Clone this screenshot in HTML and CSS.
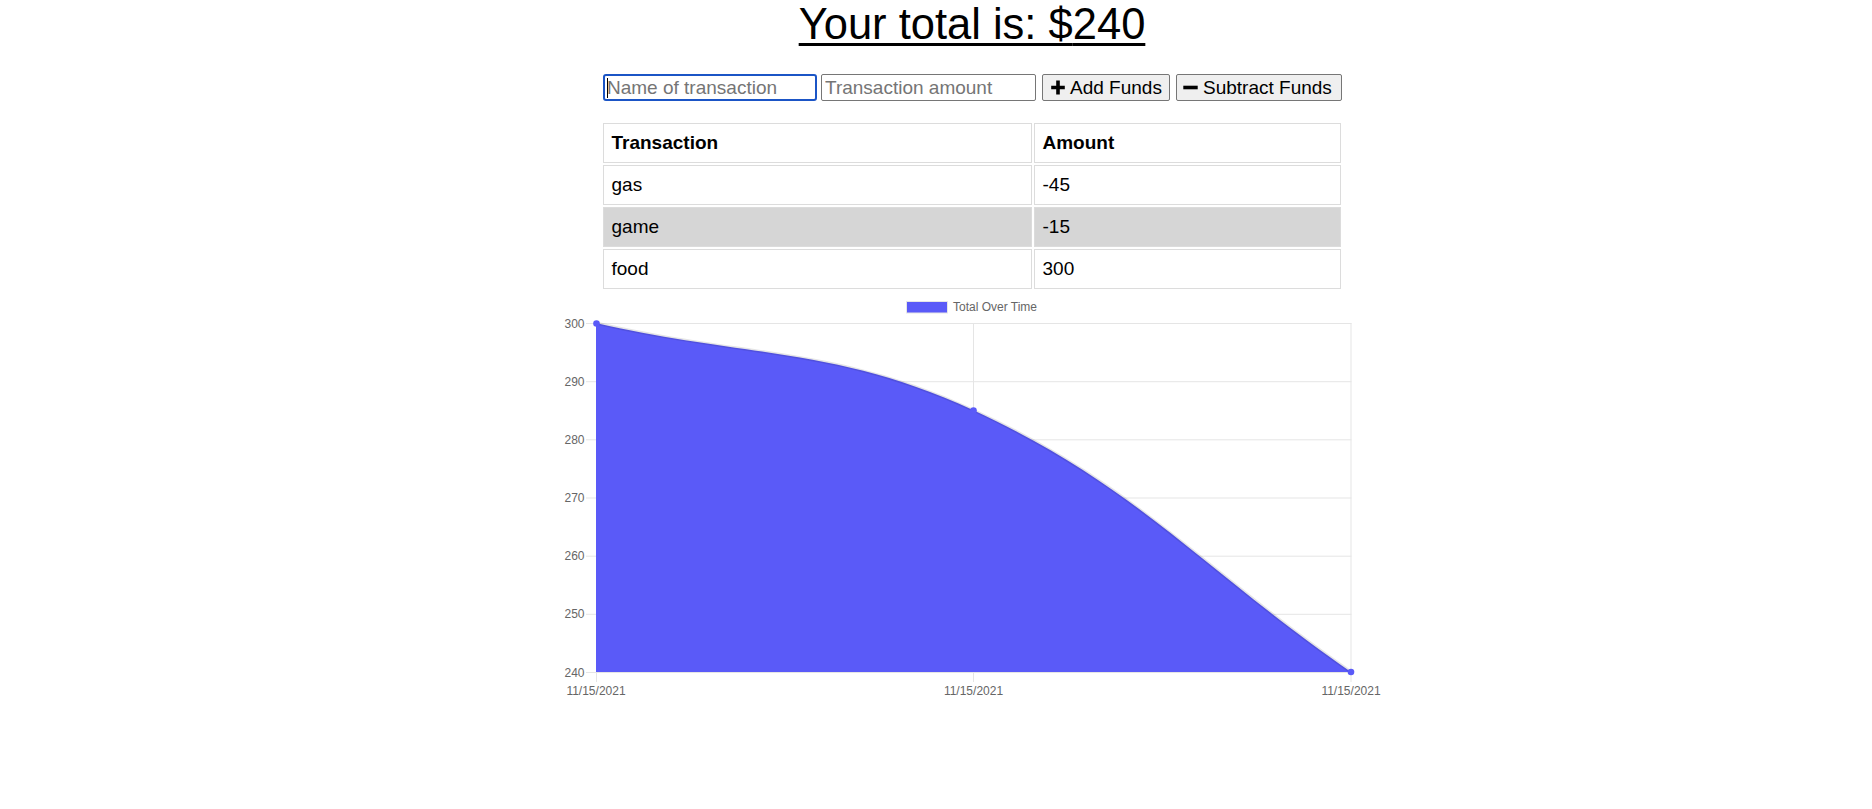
FILE: index.html
```html
<!DOCTYPE html>
<html>
<head>
<meta charset="utf-8">
<title>Budget Tracker</title>
<link rel="stylesheet" href="styles.css">
</head>
<body>
<div class="wrapper">
  <h1 class="total">Your total is: $<span>240</span></h1>
  <div class="form">
    <span class="name-wrap">
      <input class="field field-name" type="text" placeholder="Name of transaction">
      <span class="caret"></span>
    </span>
    <input class="field field-amount" type="text" placeholder="Transaction amount">
    <button class="btn btn-add"><svg class="ico" width="14" height="15" viewBox="0 0 14 15"><path d="M5.2 0.6h3.6v5.1h5v3.6h-5v5.1h-3.6v-5.1h-5v-3.6h5z" fill="#000"/></svg>Add Funds</button>
    <button class="btn btn-sub"><svg class="ico" width="15" height="15" viewBox="0 0 15 15"><rect x="0.3" y="5.7" width="14.4" height="3.6" fill="#000"/></svg>Subtract Funds</button>
  </div>
  <table class="tx">
    <thead>
      <tr><th class="col-name">Transaction</th><th class="col-amt">Amount</th></tr>
    </thead>
    <tbody>
      <tr><td>gas</td><td>-45</td></tr>
      <tr class="alt"><td>game</td><td>-15</td></tr>
      <tr><td>food</td><td>300</td></tr>
    </tbody>
  </table>
  <svg class="chart" width="840" height="430" viewBox="552 291 840 430">
    <rect x="906.5" y="301.5" width="41" height="11.5" fill="#5a5af8" stroke="#e6e6e6" stroke-width="1"/>
    <text x="953" y="311.2" class="lbl">Total Over Time</text>
    <g stroke="#e5e5e5" stroke-width="1">
      <line x1="586" y1="323.5" x2="1351.5" y2="323.5"/>
      <line x1="586" y1="381.7" x2="1351.5" y2="381.7"/>
      <line x1="586" y1="439.8" x2="1351.5" y2="439.8"/>
      <line x1="586" y1="498" x2="1351.5" y2="498"/>
      <line x1="586" y1="556.2" x2="1351.5" y2="556.2"/>
      <line x1="586" y1="614.3" x2="1351.5" y2="614.3"/>
      <line x1="586" y1="672.5" x2="1351.5" y2="672.5"/>
      <line x1="596.5" y1="323" x2="596.5" y2="682"/>
      <line x1="973.5" y1="323" x2="973.5" y2="682"/>
      <line x1="1351" y1="323" x2="1351" y2="682"/>
    </g>
    <path d="M596,323 C747,357.9 835.3,346.4 973.5,410.25 C1137.3,486 1200,567.3 1351,672 L596,672 Z" fill="#5a5af8"/>
    <path d="M596,323 C747,357.9 835.3,346.4 973.5,410.25 C1137.3,486 1200,567.3 1351,672" fill="none" stroke="rgba(0,0,0,0.1)" stroke-width="3"/>
    <g fill="#5a5af8">
      <circle cx="596.5" cy="323.5" r="3.3"/>
      <circle cx="973.5" cy="410.5" r="3.3"/>
      <circle cx="1351" cy="672" r="3.3"/>
    </g>
    <g class="lbl" text-anchor="end">
      <text x="584.5" y="327.6">300</text>
      <text x="584.5" y="385.8">290</text>
      <text x="584.5" y="443.9">280</text>
      <text x="584.5" y="502.1">270</text>
      <text x="584.5" y="560.3">260</text>
      <text x="584.5" y="618.4">250</text>
      <text x="584.5" y="676.6">240</text>
    </g>
    <g class="lbl" text-anchor="middle">
      <text x="596" y="694.5">11/15/2021</text>
      <text x="973.5" y="694.5">11/15/2021</text>
      <text x="1351" y="694.5">11/15/2021</text>
    </g>
  </svg>
</div>
</body>
</html>
```
FILE: styles.css
```css
html, body {
  margin: 0;
  padding: 0;
  background: #fff;
}
body {
  padding-left: 72px;
  font-family: "Liberation Sans", Arial, sans-serif;
  color: #000;
}
.wrapper {
  width: 840px;
  margin: 0 auto;
  display: flex;
  flex-direction: column;
  align-items: center;
}
.total {
  margin: 0;
  font-size: 43.5px;
  font-weight: normal;
  line-height: 48px;
  height: 48px;
  text-decoration: underline;
  text-decoration-thickness: 3px;
  text-underline-offset: 4px;
}
.form {
  margin-top: 26px;
  display: flex;
  align-items: stretch;
  height: 27px;
  margin-left: 1px;
}
.name-wrap {
  position: relative;
  display: flex;
}
.caret {
  position: absolute;
  left: 4px;
  top: 4px;
  width: 1px;
  height: 20px;
  background: #000;
}
.field {
  box-sizing: border-box;
  height: 27px;
  font-family: "Liberation Sans", Arial, sans-serif;
  font-size: 19px;
  padding: 0 3px;
  color: #000;
  background: #fff;
  border: 1px solid #767676;
  border-radius: 2px;
  outline: none;
}
.field::placeholder {
  color: #757575;
}
.field-name {
  width: 214px;
  border: 2px solid #1b55c6;
  border-radius: 3px;
  padding: 0 2px;
}
.field-amount {
  width: 215px;
  margin-left: 4px;
}
.btn {
  box-sizing: border-box;
  height: 27px;
  margin-left: 6px;
  padding: 0 6px;
  display: flex;
  align-items: center;
  font-family: "Liberation Sans", Arial, sans-serif;
  font-size: 19px;
  color: #000;
  background: #efefef;
  border: 1px solid #767676;
  border-radius: 2px;
}
.btn-add { width: 128px; padding-left: 8px; }
.btn-sub { width: 166px; padding-left: 6px; }
.ico {
  margin-right: 5px;
  flex: none;
}
.tx {
  margin-top: 20px;
  margin-left: -1px;
  border-spacing: 2px;
  width: 742px;
  font-size: 19px;
}
.tx th, .tx td {
  box-sizing: border-box;
  height: 40px;
  padding: 0 8px;
  border: 1px solid #dcdcdc;
  text-align: left;
}
.tx th { font-weight: bold; }
.tx .col-name { width: 429px; }
.tx .col-amt { width: 307px; }
.tx .alt td { background: #d6d6d6; }
.chart {
  display: block;
  margin-top: 0;
  flex: none;
}
.lbl {
  font-family: "Liberation Sans", Arial, sans-serif;
  font-size: 12px;
  fill: #666;
}
```
